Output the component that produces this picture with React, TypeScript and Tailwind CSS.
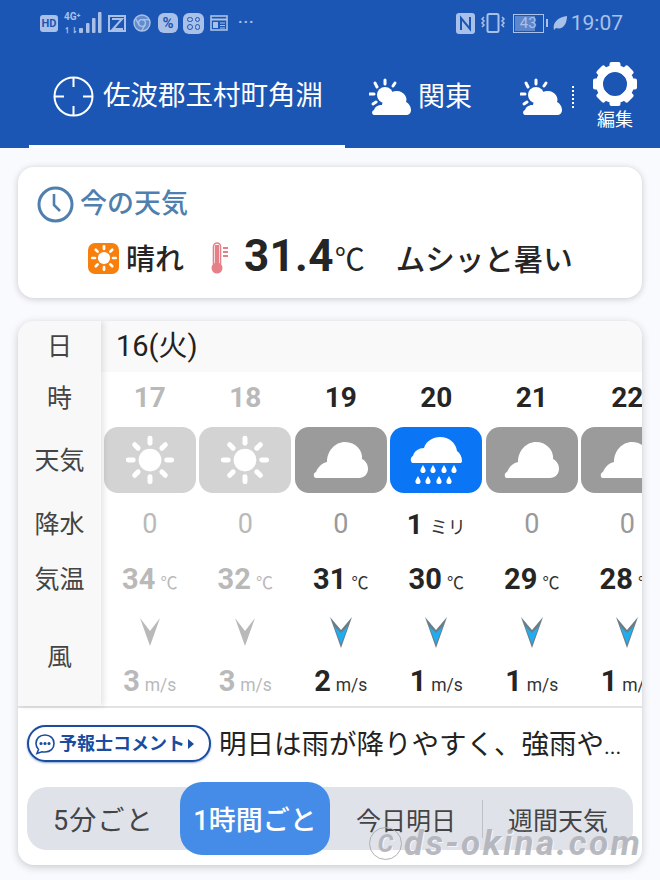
import { ReactNode } from 'react';

type Kind = 'sun' | 'cloud' | 'rain';

interface Hour {
  hour: number;
  kind: Kind;
  rain: number;
  temp: number;
  wind: number;
  past: boolean;
}

const hours: Hour[] = [
  { hour: 17, kind: 'sun', rain: 0, temp: 34, wind: 3, past: true },
  { hour: 18, kind: 'sun', rain: 0, temp: 32, wind: 3, past: true },
  { hour: 19, kind: 'cloud', rain: 0, temp: 31, wind: 2, past: false },
  { hour: 20, kind: 'rain', rain: 1, temp: 30, wind: 1, past: false },
  { hour: 21, kind: 'cloud', rain: 0, temp: 29, wind: 1, past: false },
  { hour: 22, kind: 'cloud', rain: 0, temp: 28, wind: 1, past: false },
];

function Sun({ size }: { size: number }) {
  const angles = [0, 45, 90, 135, 180, 225, 270, 315];
  return (
    <svg width={size} height={size} viewBox="0 0 48 48">
      <circle cx="24" cy="24" r="10.5" fill="white" />
      {angles.map((a) => (
        <line key={a} x1="24" y1="4" x2="24" y2="8.5" stroke="white" strokeWidth="4.6" strokeLinecap="round" transform={`rotate(${a} 24 24)`} />
      ))}
    </svg>
  );
}

function WeatherIcon({ kind }: { kind: Kind }) {
  if (kind === 'sun') return <Sun size={52} />;
  if (kind === 'cloud') {
    return (
      <svg width="55" height="37" viewBox="0 0 55 37">
        <path d="M3 36 C0 36 0 31 3 30 C5 25 9 21 14 20 C14 9 22 0 32 0 C43 0 50 9 49 17 C53 19 55 23 55 27 C55 32 51 36 46 36 Z" fill="white" />
      </svg>
    );
  }
  const drops = [
    [13, 32], [23, 32], [34, 32], [44, 32],
    [8, 43], [18, 43], [29, 43], [39, 43],
  ];
  return (
    <svg width="52" height="47" viewBox="0 0 52 47">
      <path d="M3 26 C0 26 0 20 3 19 C4 14 9 11 14 11 C16 4 23 0 30 0 C39 0 46 6 47 14 C50 16 52 20 52 24 C52 25.5 51 26 50 26 Z" fill="white" />
      {drops.map(([x, y]) => (
        <path key={`${x}-${y}`} d={`M${x} ${y - 4} C${x + 1} ${y - 2} ${x + 2.6} ${y} ${x + 2.6} ${y + 1.4} C${x + 2.6} ${y + 5} ${x - 2.6} ${y + 5} ${x - 2.6} ${y + 1.4} C${x - 2.6} ${y} ${x - 1} ${y - 2} ${x} ${y - 4} Z`} fill="white" />
      ))}
    </svg>
  );
}

function WindArrow({ past }: { past: boolean }) {
  if (past) {
    return (
      <svg width="20" height="28" viewBox="0 0 20 28">
        <polygon points="0,0 10,28 20,0 10,13" fill="#b9b9b9" />
      </svg>
    );
  }
  return (
    <svg width="22" height="31" viewBox="0 0 22 31">
      <polygon points="0,0 11,31 22,0 11,13" fill="#6c7d88" />
      <polygon points="4,9 11,27 18,9 11,16" fill="#1eaeef" />
    </svg>
  );
}

function SunCloud() {
  return (
    <svg width="42" height="38" viewBox="0 0 42 38">
      <g stroke="white" strokeWidth="3" strokeLinecap="round">
        <line x1="16" y1="2" x2="16" y2="6" />
        <line x1="6" y1="5" x2="8" y2="9" />
        <line x1="26" y1="5" x2="24" y2="8" />
        <line x1="1" y1="16" x2="5" y2="16" />
        <line x1="4" y1="26" x2="7" y2="24" />
      </g>
      <circle cx="16" cy="17" r="8" fill="white" />
      <path d="M5 37 C3 37 2 33 5 32 C7 27 11 27 13 27 C14 20 20 13 28 13 C35 13 39 20 37 24 C41 26 42 30 42 32 C42 35 40 37 37 37 Z" fill="white" />
    </svg>
  );
}

function Gear() {
  const angles = [0, 45, 90, 135, 180, 225, 270, 315];
  return (
    <svg width="46" height="46" viewBox="0 0 46 46">
      {angles.map((a) => (
        <rect key={a} x="17.5" y="1" width="11" height="10" rx="2" fill="white" transform={`rotate(${a} 23 23)`} />
      ))}
      <circle cx="23" cy="23" r="15.5" fill="none" stroke="white" strokeWidth="7" />
    </svg>
  );
}

function Crosshair() {
  return (
    <svg width="41" height="41" viewBox="0 0 41 41" fill="none" stroke="white" strokeWidth="2">
      <circle cx="20.5" cy="20.5" r="19" />
      <path d="M20.5 1V11M20.5 30V40M1 20.5H11M30 20.5H40" />
    </svg>
  );
}

function StatusBar() {
  return (
    <div className="h-[46px] flex items-center pl-[40px] pr-[37px] text-[#a9c1e8]">
      <div className="w-[18px] h-[17px] rounded-[3px] bg-[#a9c1e8] text-[#1c56b5] text-[11px] font-bold flex items-center justify-center leading-none">HD</div>
      <div className="ml-[6px] w-[16px] h-[23px] flex flex-col justify-between text-[10px] font-bold leading-none whitespace-nowrap">
        <span>4G⁺</span>
        <span className="text-[8px]">↿⇂</span>
      </div>
      <svg width="26" height="22" viewBox="0 0 26 22" className="-ml-[1px]" fill="#a9c1e8">
        <rect x="0" y="16" width="4" height="5" rx="1" />
        <rect x="7" y="11" width="3.5" height="10" rx="1" />
        <rect x="13" y="6" width="3.5" height="15" rx="1" />
        <rect x="19" y="0" width="3.5" height="21" rx="1" />
      </svg>
      <svg width="18" height="17" viewBox="0 0 18 17" className="ml-[3px]" fill="none" stroke="#a9c1e8" strokeWidth="2">
        <rect x="1" y="1" width="16" height="15" />
        <path d="M4 4H14L5 14H15" />
      </svg>
      <svg width="18" height="18" viewBox="0 0 18 18" className="ml-[7px]" fill="none" stroke="#a9c1e8" strokeWidth="1.4">
        <circle cx="9" cy="9" r="8" fill="#a9c1e8" fillOpacity="0.5" />
        <circle cx="9" cy="9" r="3.4" />
        <path d="M9 5.6H16M6 10.8L2.5 4.5M12 10.8L8.5 17" />
      </svg>
      <div className="ml-[7px] w-[20px] h-[20px] rounded-[6px] bg-[#a9c1e8] text-[#1c56b5] text-[15px] font-bold flex items-center justify-center leading-none">%</div>
      <div className="ml-[5px] w-[21px] h-[21px] rounded-[6px] bg-[#a9c1e8] grid grid-cols-2 gap-[2px] p-[4px]">
        <span className="rounded-full border border-[#1c56b5]" />
        <span className="rounded-full border border-[#1c56b5]" />
        <span className="rounded-full border border-[#1c56b5]" />
        <span className="rounded-full border border-[#1c56b5]" />
      </div>
      <svg width="18" height="16" viewBox="0 0 18 16" className="ml-[6px]" fill="none" stroke="#a9c1e8">
        <rect x="1" y="1" width="16" height="14" strokeWidth="1.6" />
        <path d="M1 4.5H17" strokeWidth="2" />
        <rect x="3" y="7" width="5" height="6" fill="#a9c1e8" stroke="none" />
        <path d="M10 8H15M10 10.5H15M10 13H15" strokeWidth="1.2" />
      </svg>
      <span className="ml-[10px] text-[15px] font-bold leading-none tracking-[1px] -mt-[2px]">···</span>

      <div className="ml-auto flex items-center">
        <svg width="19" height="21" viewBox="0 0 19 21">
          <rect width="19" height="21" rx="3" fill="#a9c1e8" />
          <path d="M5 17V5L14 16V4" fill="none" stroke="#1c56b5" strokeWidth="2" />
        </svg>
        <svg width="25" height="20" viewBox="0 0 25 20" className="ml-[6px]" fill="none" stroke="#a9c1e8" strokeWidth="1.5">
          <rect x="6.5" y="1" width="11" height="18" rx="1.5" strokeWidth="2" />
          <path d="M3 4L1 6L3 8L1 10L3 12L1 14M21 4L23 6L21 8L23 10L21 12L23 14" />
        </svg>
        <div className="ml-[7px] w-[31px] h-[19px] border border-[#a9c1e8] flex items-center p-[1px]">
          <div className="w-[20px] h-full bg-[#5d87cd] -mr-[20px]" />
          <span className="relative w-full text-center text-[15px] leading-none">43</span>
        </div>
        <div className="w-[2px] h-[8px] ml-[2px] bg-[#a9c1e8]" />
        <svg width="14" height="15" viewBox="0 0 14 15" className="ml-[5px]">
          <path d="M1 14C-1 6 6 1 14 0C14 8 10 14 3 12Z" fill="#a9c1e8" />
        </svg>
        <span className="ml-[4px] text-[21px] leading-none">19:07</span>
      </div>
    </div>
  );
}

function HeaderTabs() {
  return (
    <div className="h-[102px] flex items-stretch text-white pl-[29px]">
      <div className="w-[316px] border-b-[3px] border-white flex items-center pl-[24px] gap-[9px] pt-[2px]">
        <Crosshair />
        <span className="text-[27.5px] whitespace-nowrap leading-none -mt-[1px]">佐波郡玉村町角淵</span>
      </div>
      <div className="ml-[24px] flex items-center gap-[7px]">
        <SunCloud />
        <span className="text-[27px] leading-none">関東</span>
      </div>
      <div className="ml-[48px] flex items-center gap-[10px]">
        <SunCloud />
        <span className="w-[2px] h-[22px] border-l-2 border-dotted border-white" />
      </div>
      <div className="ml-[18px] flex flex-col items-center pt-[15px] w-[46px]">
        <Gear />
        <span className="text-[18px] leading-none mt-[4px] whitespace-nowrap">編集</span>
      </div>
    </div>
  );
}

function Label({ className, children }: { className: string; children: ReactNode }) {
  return <div className={`flex items-center justify-center text-[25px] text-[#444] leading-none ${className}`}>{children}</div>;
}

function HourColumn({ h }: { h: Hour }) {
  const strong = h.past ? 'text-[#b9b9b9]' : 'text-[#252525]';
  const unit = h.past ? 'text-[#b9b9b9]' : 'text-[#333]';
  const tile = h.kind === 'rain' ? 'bg-[#0a76f5]' : 'bg-[#9b9b9b]';
  return (
    <div className="w-[95.5px] shrink-0 flex flex-col items-center">
      <div className={`h-[52px] flex items-center text-[28px] font-bold leading-none ${strong}`}>{h.hour}</div>
      <div className="h-[72px] w-full flex items-center justify-center">
        <div className={`w-[92px] shrink-0 h-[66px] rounded-[14px] flex items-center justify-center ${h.past ? 'bg-[#d3d3d3]' : tile}`}>
          <WeatherIcon kind={h.kind} />
        </div>
      </div>
      <div className="h-[56px] flex items-baseline pt-[15px] leading-none whitespace-nowrap">
        {h.rain > 0 ? (
          <>
            <span className="text-[28px] font-bold text-[#252525]">{h.rain}</span>
            <span className="ml-[7px] text-[18px] text-[#333]">ミリ</span>
          </>
        ) : (
          <span className={`text-[27px] ${h.past ? 'text-[#b9b9b9]' : 'text-[#999]'}`}>{h.rain}</span>
        )}
      </div>
      <div className="h-[54px] flex items-baseline pt-[13px] leading-none whitespace-nowrap">
        <span className={`text-[29px] font-bold ${strong}`}>{h.temp}</span>
        <span className={`ml-[5px] text-[17px] ${unit}`}>℃</span>
      </div>
      <div className="h-[50px] flex items-center pt-[2px]">
        <WindArrow past={h.past} />
      </div>
      <div className="h-[51px] flex items-baseline pt-[11px] leading-none whitespace-nowrap">
        <span className={`text-[29px] font-bold ${strong}`}>{h.wind}</span>
        <span className={`ml-[5px] text-[17.5px] ${unit}`}>m/s</span>
      </div>
    </div>
  );
}

export default function App() {
  return (
    <div className="w-[660px] h-[880px] overflow-hidden bg-[#f8fafd] relative font-['Roboto','Noto_Sans_CJK_JP',sans-serif]">
      <header className="bg-[#1c56b5]">
        <StatusBar />
        <HeaderTabs />
      </header>

      <main className="pl-[18px] pt-[19px] pr-[18px]">
        {/* now */}
        <section className="h-[131px] bg-white rounded-[16px] shadow-[0_1px_7px_rgba(0,0,0,0.2)] pl-[19px] pt-[19px]">
          <div className="flex items-center gap-[6px]">
            <svg width="37" height="37" viewBox="0 0 37 37" fill="none" stroke="#4f7fae" strokeWidth="3">
              <circle cx="18.5" cy="18.5" r="16.5" />
              <path d="M17 8V19L23 25" strokeWidth="2.6" />
            </svg>
            <span className="text-[27px] font-medium text-[#4f7fae] leading-none">今の天気</span>
          </div>
          <div className="ml-[51px] mt-[15px] flex items-center text-[#252525] leading-none whitespace-nowrap">
            <div className="w-[31px] h-[31px] rounded-[7px] bg-[#f77f0c] flex items-center justify-center">
              <Sun size={28} />
            </div>
            <span className="ml-[7px] text-[29px] font-medium mt-[5px]">晴れ</span>
            <svg width="17" height="33" viewBox="0 0 17 33" className="ml-[27px]">
              <rect x="2.5" y="1" width="7" height="24" rx="3.5" fill="none" stroke="#e58088" strokeWidth="1.6" />
              <rect x="4" y="3" width="4" height="22" fill="#e58088" />
              <circle cx="6" cy="26" r="5.5" fill="#e58088" />
              <path d="M12 6H17M12 10H17M12 14H17" stroke="#e58088" strokeWidth="1.8" />
            </svg>
            <span className="ml-[16px] text-[44px] font-bold tracking-[0.3px] -mt-[4px]">31.4</span>
            <span className="ml-[1px] text-[30px] mt-[3px]">℃</span>
            <span className="ml-[31px] text-[29.5px] font-medium mt-[5px]">ムシッと暑い</span>
          </div>
        </section>

        {/* hourly table */}
        <section className="mt-[23px] h-[544px] bg-white rounded-[16px] shadow-[0_2px_8px_rgba(0,0,0,0.2)] overflow-hidden">
          <div className="flex h-[387px] border-b-2 border-[#e2e2e2]">
            <div className="w-[83px] shrink-0 bg-[#f8f8f8] relative z-10 shadow-[3px_0_6px_rgba(0,0,0,0.1)]">
              <Label className="h-[51px]">日</Label>
              <Label className="h-[52px]">時</Label>
              <Label className="h-[72px]">天気</Label>
              <Label className="h-[56px]">降水</Label>
              <Label className="h-[54px]">気温</Label>
              <Label className="h-[100px] pt-[2px]">風</Label>
            </div>
            <div className="flex-1 min-w-0 overflow-hidden">
              <div className="h-[51px] bg-[#f9f9f9] pl-[15px] flex items-center text-[29px] text-[#222] leading-none">16(火)</div>
              <div className="flex pl-[1px]">
                {hours.map((h) => (
                  <HourColumn key={h.hour} h={h} />
                ))}
              </div>
            </div>
          </div>

          {/* comment */}
          <div className="flex items-center pl-[9px] mt-[17px]">
            <div className="w-[184px] h-[37px] shrink-0 rounded-full border-2 border-[#1a4c9f] bg-white shadow-[0_1px_2px_rgba(26,76,159,0.5)] flex items-center pl-[5px] text-[#1a4c9f] leading-none">
              <svg width="22" height="22" viewBox="0 0 22 22" fill="none" stroke="#1a4c9f" strokeWidth="1.6">
                <path d="M11 2C5.5 2 2 5.5 2 10.5C2 13 3 15 4.5 16.5L3 20.5L8 18.8C9 19 10 19 11 19C16.5 19 20 15.5 20 10.5C20 5.5 16.5 2 11 2Z" />
                <circle cx="7" cy="10.5" r="0.8" fill="#1a4c9f" />
                <circle cx="11" cy="10.5" r="0.8" fill="#1a4c9f" />
                <circle cx="15" cy="10.5" r="0.8" fill="#1a4c9f" />
              </svg>
              <span className="ml-[3px] text-[18px] font-bold whitespace-nowrap">予報士コメント</span>
              <svg width="6" height="10" viewBox="0 0 6 10" className="ml-[3px]" fill="#1a4c9f">
                <polygon points="0,0 6,5 0,10" />
              </svg>
            </div>
            <span className="ml-[8px] text-[27.5px] text-[#222] leading-none whitespace-nowrap mt-[3px]">明日は雨が降りやすく、強雨や<span className="text-[22px]">...</span></span>
          </div>

          {/* range tabs */}
          <div className="ml-[9px] mt-[25px] w-[606px] h-[63px] rounded-[20px] bg-[#dfe2e9] flex items-center text-[#444] leading-none">
            <div className="w-[153px] text-center text-[27px] tracking-[1.2px] pt-[5px]">5分ごと</div>
            <div className="w-[150px] h-[73px] shrink-0 rounded-[22px] bg-[#448ce8] text-white text-[27px] font-medium flex items-center justify-center whitespace-nowrap pt-[5px]">1時間ごと</div>
            <div className="w-[152px] text-center text-[25px] pt-[5px]">今日明日</div>
            <div className="w-[1px] h-[38px] bg-[#bcc0c9]" />
            <div className="flex-1 text-center text-[25px] pt-[5px]">週間天気</div>
          </div>
        </section>
      </main>

      {/* watermark */}
      <div className="absolute left-[369px] top-[826px] flex items-center text-[#b2b3ba] leading-none pointer-events-none whitespace-nowrap opacity-90 [text-shadow:1px_1px_0_rgba(255,255,255,0.8)]">
        <span className="w-[33px] h-[33px] rounded-full border border-[#a9aab0] flex items-center justify-center text-[25px] font-bold italic">C</span>
        <span className="ml-[2px] text-[35px] font-bold italic tracking-[2.4px]">ds-okina.com</span>
      </div>
    </div>
  );
}
